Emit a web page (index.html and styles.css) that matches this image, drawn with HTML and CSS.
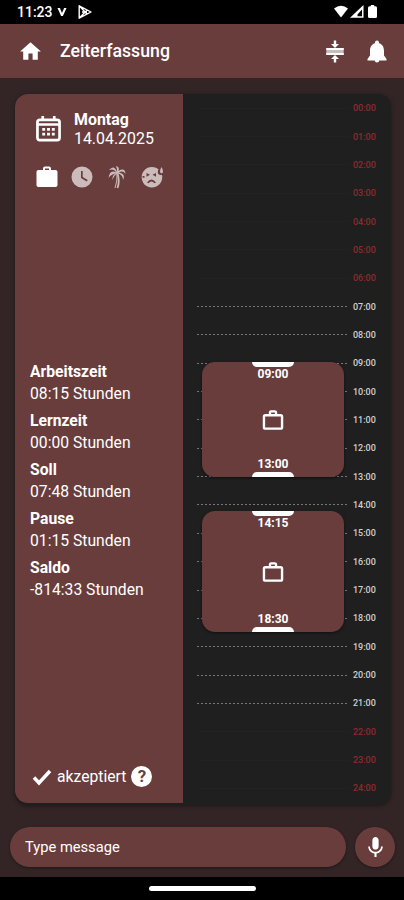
FILE: index.html
```html
<!DOCTYPE html>
<html lang="de">

<head>
    <meta charset="UTF-8">
    <meta name="viewport" content="width=device-width, initial-scale=1.0">
    <title>Zeiterfassung</title>
    <link rel="stylesheet" href="styles.css">
</head>

<body>
    <div class="statusbar">
        <span class="clock">11:23</span>
        <svg class="status-v" viewBox="0 0 10 10"><path d="M0 0h2.600L5 5.500 7.400 0H10L6 9H4z" /></svg>
        <svg class="status-play" viewBox="0 0 16 16"><path d="M2.200 1.800 14 8 2.200 14.200zM2.200 1.800 10 10M2.200 14.200 10 6M5 8h5" /></svg>
        <svg class="status-right" viewBox="0 0 44 14">
            <path d="M0 3.600Q7-2 14 3.600L7 12.500z" />
            <path fill-rule="evenodd" d="M29.500 0v12.800H16zM28 4.500 23.500 9.500v1.800H28z" />
            <path d="M36.800 0h3.400v1.300h1.300q1.500 0 1.500 1.500v8.700q0 1.500-1.500 1.500h-6q-1.500 0-1.500-1.500V2.800q0-1.500 1.500-1.500h1.300z" />
        </svg>
    </div>

    <header class="header">
        <svg class="icon home" viewBox="0 0 24 24"><path d="M10 20v-6h4v6h5v-8h3L12 3 2 12h3v8z" /></svg>
        <h1>Zeiterfassung</h1>
        <svg class="icon compress" viewBox="0 0 24 24">
            <path d="M8 19.500h2.800V23h2.400v-3.500H16l-4-4zm8-15h-2.800V1h-2.400v3.500H8l4 4z" />
            <path class="bars" d="M3.300 8.600h17.400v6.800H3.300z" />
            <path d="M3.300 8.600h17.400v1.900H3.300zm0 4.900h17.400v1.900H3.300z" />
        </svg>
        <svg class="icon bell" viewBox="0 0 24 24"><path d="M12 23c1.300 0 2.200-.9 2.200-2H9.800c0 1.100.9 2 2.200 2zM19 16v-5c0-3.500-1.900-6.500-5-7.200V3a2 2 0 0 0-4 0v.8C6.900 4.500 5 7.500 5 11v5l-2.500 3.500V21h19v-1.500z" /></svg>
    </header>

    <main class="card">
        <section class="summary">
            <div class="date">
                <svg class="calendar" viewBox="0 0 26 28">
                    <path class="stroke" d="M4 4.500h18q2.500 0 2.500 2.500v16q0 2.500-2.500 2.500H4q-2.500 0-2.500-2.500V7q0-2.500 2.500-2.500zM1.500 9.300h23M7 .5v4M19 .5v4" />
                    <path d="M6.500 13h3v2.700h-3zm5 0h3v2.700h-3zm5 0h3v2.700h-3zM6.500 18h3v2.700h-3zm5 0h3v2.700h-3zm5 0h3v2.700h-3z" />
                </svg>
                <div>
                    <b>Montag</b>
                    <p>14.04.2025</p>
                </div>
            </div>
            <div class="types">
                <svg viewBox="0 0 24 24"><path d="M20.500 5H16V3.500C16 2.400 15.100 1.500 14 1.500h-4C8.900 1.500 8 2.400 8 3.500V5H3.500C2.400 5 1.500 5.900 1.500 7v13c0 1.100.9 2 2 2h17c1.100 0 2-.9 2-2V7c0-1.100-.9-2-2-2zM14 5h-4V3.500h4z" /></svg>
                <svg class="off" viewBox="0 0 24 24"><path fill-rule="evenodd" d="M12 1.500a10.500 10.500 0 1 0 0 21 10.500 10.500 0 0 0 0-21zM16.800 16.500 11 13V6h1.700v6l5 3z" /></svg>
                <svg class="off palm" viewBox="0 0 24 24">
                    <path d="M12 7Q9-1 4 5 9 3 11 7.500 5 4 3.500 13 6 9 11 8.500 7 10 7.500 15 9 10 12.500 8.500 18 9.500 18 15 21 9 14 7.500 18 5 20.500 9 20 2 13.500 6 15 2 11 1 12 3 12 7z" />
                    <path class="stroke" d="M12.500 8.500Q15 16 12.500 23" />
                    <path class="stroke thin" d="M12 9Q12.500 16 10 23" />
                </svg>
                <svg class="off sick" viewBox="0 0 24 24"><path fill-rule="evenodd" d="M18.500 4.300A10.300 10.300 0 1 0 22 10Q16 10 18.500 4.300zM6.500 8l3.500 1.800-3.500 2zM16 8v3.800L12.500 9.800zM7 17.500q4.500-6 9 0l-1.500.8q-3-3.600-6 0zM2.500 11h2v1.700h-2zM21.500 2Q18.500 7 21.500 8.500 24.500 7 21.500 2z" /></svg>
            </div>
            <dl class="times">
                <dt>Arbeitszeit</dt>
                <dd>08:15 Stunden</dd>
                <dt>Lernzeit</dt>
                <dd>00:00 Stunden</dd>
                <dt>Soll</dt>
                <dd>07:48 Stunden</dd>
                <dt>Pause</dt>
                <dd>01:15 Stunden</dd>
                <dt>Saldo</dt>
                <dd>-814:33 Stunden</dd>
            </dl>
            <div class="state">
                <svg class="check" viewBox="0 0 20 18"><path d="M2 9.500 7 15 18 3" /></svg>
                <span>akzeptiert</span>
                <span class="help">?</span>
            </div>
        </section>

        <section class="timeline">
            <div id="hours"></div>
            <div class="entry morning">
                <span class="handle top"></span>
                <span>09:00</span>
                <svg class="case" viewBox="0 0 22 21"><path d="M3 5.500h16q1.500 0 1.500 1.500v11q0 1.500-1.500 1.500H3q-1.500 0-1.500-1.500V7q0-1.500 1.500-1.500zM7.800 5V2.700q0-1.200 1.200-1.200h4q1.200 0 1.200 1.200V5" /></svg>
                <span>13:00</span>
                <span class="handle bottom"></span>
            </div>
            <div class="entry afternoon">
                <span class="handle top"></span>
                <span>14:15</span>
                <svg class="case" viewBox="0 0 22 21"><path d="M3 5.500h16q1.500 0 1.500 1.500v11q0 1.500-1.500 1.500H3q-1.500 0-1.500-1.500V7q0-1.500 1.500-1.500zM7.800 5V2.700q0-1.200 1.200-1.200h4q1.200 0 1.200 1.200V5" /></svg>
                <span>18:30</span>
                <span class="handle bottom"></span>
            </div>
        </section>
    </main>

    <footer class="message">
        <input type="text" placeholder="Type message">
        <button class="mic">
            <svg viewBox="0 0 24 24"><path d="M12 14c1.660 0 3-1.340 3-3V5c0-1.660-1.340-3-3-3S9 3.340 9 5v6c0 1.660 1.340 3 3 3zm5.300-3c0 3-2.540 5.100-5.300 5.100S6.700 14 6.700 11H5c0 3.410 2.720 6.230 6 6.720V21h2v-3.280c3.280-.48 6-3.300 6-6.720z" /></svg>
        </button>
    </footer>
    <div class="navbar"><span></span></div>

    <script>
        const hours = document.getElementById('hours');

        for (let i = 0; i <= 24; i++) {
            const row = document.createElement('div');
            // outside of 07:00 - 21:00 nothing can be booked
            row.className = i < 7 || i > 21 ? 'hour closed' : 'hour';
            row.innerHTML = `<i></i><span>${String(i).padStart(2, '0')}:00</span>`;
            hours.appendChild(row);
        }
    </script>
</body>

</html>
```
FILE: styles.css
```css
* {
    margin: 0;
    padding: 0;
    box-sizing: border-box;
}

body {
    height: 900px;
    display: flex;
    flex-direction: column;
    overflow: hidden;
    background-color: #332526;
    color: #fff;
    font-family: Roboto, "Liberation Sans", sans-serif;
}

svg {
    display: block;
    flex: none;
    fill: #fff;
}

.stroke {
    fill: none;
    stroke: #fff;
    stroke-width: 2.8;
}

.statusbar {
    height: 24px;
    flex: none;
    display: flex;
    align-items: center;
    padding: 0 26px 0 17px;
    background-color: #000;
}

.clock {
    width: 35px;
    font-size: 14px;
    font-weight: 500;
}

.status-v {
    width: 10px;
    height: 9px;
    margin-left: 5px;
}

.status-play {
    width: 16px;
    height: 16px;
    margin-left: 10px;
    fill: none;
    stroke: #fff;
    stroke-width: 1.4;
    stroke-linejoin: round;
}

.status-right {
    width: 44px;
    height: 14px;
    margin-left: auto;
}

.header {
    height: 54px;
    flex: none;
    display: flex;
    align-items: center;
    padding: 0 15px 0 18px;
    background-color: #6a3d3d;
}

.icon {
    width: 25px;
    height: 25px;
}

.header h1 {
    margin-left: 17px;
    font-size: 17.7px;
    font-weight: 500;
}

.compress {
    width: 24px;
    margin-left: auto;
}

.bars {
    opacity: .65;
}

.bell {
    width: 24px;
    margin-left: 18px;
}

.card {
    height: 711px;
    flex: none;
    display: flex;
    margin: 16px 13px 0 15px;
    border-radius: 13px;
    background-color: #1f1f1f;
    box-shadow: 0 1px 4px rgba(0, 0, 0, .4);
}

.summary {
    width: 168px;
    height: 709px;
    display: flex;
    flex-direction: column;
    border-radius: 13px 0 0 13px;
    background-color: #6a3d3d;
}

.date {
    display: flex;
    align-items: center;
    margin: 16px 0 0 21px;
    font-size: 15.9px;
    line-height: 19px;
}

.calendar {
    width: 25px;
    height: 28px;
    margin-right: 13px;
}

.types {
    display: flex;
    gap: 11px;
    margin: 17px 0 0 20px;
}

.types svg {
    width: 24px;
    height: 24px;
}

.types .off {
    opacity: .65;
}

.types .palm .stroke {
    stroke-width: 1.8;
}

.types .palm .thin {
    stroke-width: 1;
}

.times {
    margin: 172px 0 0 15px;
    font-size: 15.7px;
}

.times dt {
    height: 22px;
    line-height: 22px;
    font-weight: 700;
    font-size: 15.7px;
}

.times dd {
    height: 27px;
    line-height: 22px;
}

.state {
    display: flex;
    align-items: center;
    margin: auto 0 16px 17px;
    font-size: 15.7px;
}

.check {
    width: 20px;
    height: 18px;
    margin-right: 5px;
    fill: none;
    stroke: #fff;
    stroke-width: 3.5;
}

.help {
    width: 21px;
    height: 21px;
    margin-left: 5px;
    border-radius: 50%;
    background-color: #fff;
    color: #6a3d3d;
    font-size: 17px;
    font-weight: 700;
    line-height: 21px;
    text-align: center;
}

.timeline {
    position: relative;
    flex: 1;
}

.hour {
    height: 28.35px;
    display: flex;
    align-items: center;
    padding: 0 15px 0 14px;
    color: #d0d0d0;
}

.hour i {
    flex: 1;
    height: 1px;
    margin-right: 4px;
    background: repeating-linear-gradient(to right, #777 0 2px, #1f1f1f 2px 4px);
}

.hour span {
    width: 23px;
    font-size: 9px;
    font-weight: 500;
    white-space: nowrap;
}

.closed {
    color: #8c2b2e;
}

.closed i {
    background: #222;
}

/* booked blocks lie over the hour grid */
.entry {
    position: absolute;
    left: 19px;
    width: 142px;
    display: flex;
    flex-direction: column;
    align-items: center;
    justify-content: space-between;
    border-radius: 13px;
    background-color: #6a3d3d;
    box-shadow: 0 1px 3px rgba(0, 0, 0, .5);
    font-size: 12px;
    font-weight: 700;
    line-height: 13px;
}

.morning {
    top: 268px;
    height: 115px;
}

.afternoon {
    top: 417px;
    height: 121px;
}

.handle {
    width: 42px;
    height: 5px;
    background-color: #fff;
}

.top {
    border-radius: 0 0 8px 8px;
}

.bottom {
    border-radius: 8px 8px 0 0;
}

.entry .handle + span {
    margin: 1px 0 auto;
}

.entry .case + span {
    margin: auto 0 1px;
}

.case {
    width: 22px;
    height: 20px;
    fill: none;
    stroke: #fff;
    stroke-width: 2.5;
}

.message {
    flex: none;
    display: flex;
    justify-content: space-between;
    padding: 22px 9px 0 10px;
}

.message input {
    width: 336px;
    height: 40px;
    padding-left: 15px;
    border: none;
    border-radius: 20px;
    background-color: #6a3d3d;
    box-shadow: 0 1px 3px rgba(0, 0, 0, .4);
    font-family: inherit;
    font-size: 14.7px;
}

.message input::placeholder {
    color: #fff;
}

.mic {
    width: 40px;
    height: 40px;
    border: none;
    border-radius: 50%;
    background-color: #6a3d3d;
    box-shadow: 0 1px 3px rgba(0, 0, 0, .4);
}

.mic svg {
    width: 25px;
    height: 25px;
    margin: auto;
}

.navbar {
    height: 23px;
    display: flex;
    justify-content: center;
    margin-top: auto;
    padding-top: 9px;
    background-color: #000;
}

.navbar span {
    width: 107px;
    height: 5px;
    border-radius: 3px;
    background-color: #fff;
}
```
